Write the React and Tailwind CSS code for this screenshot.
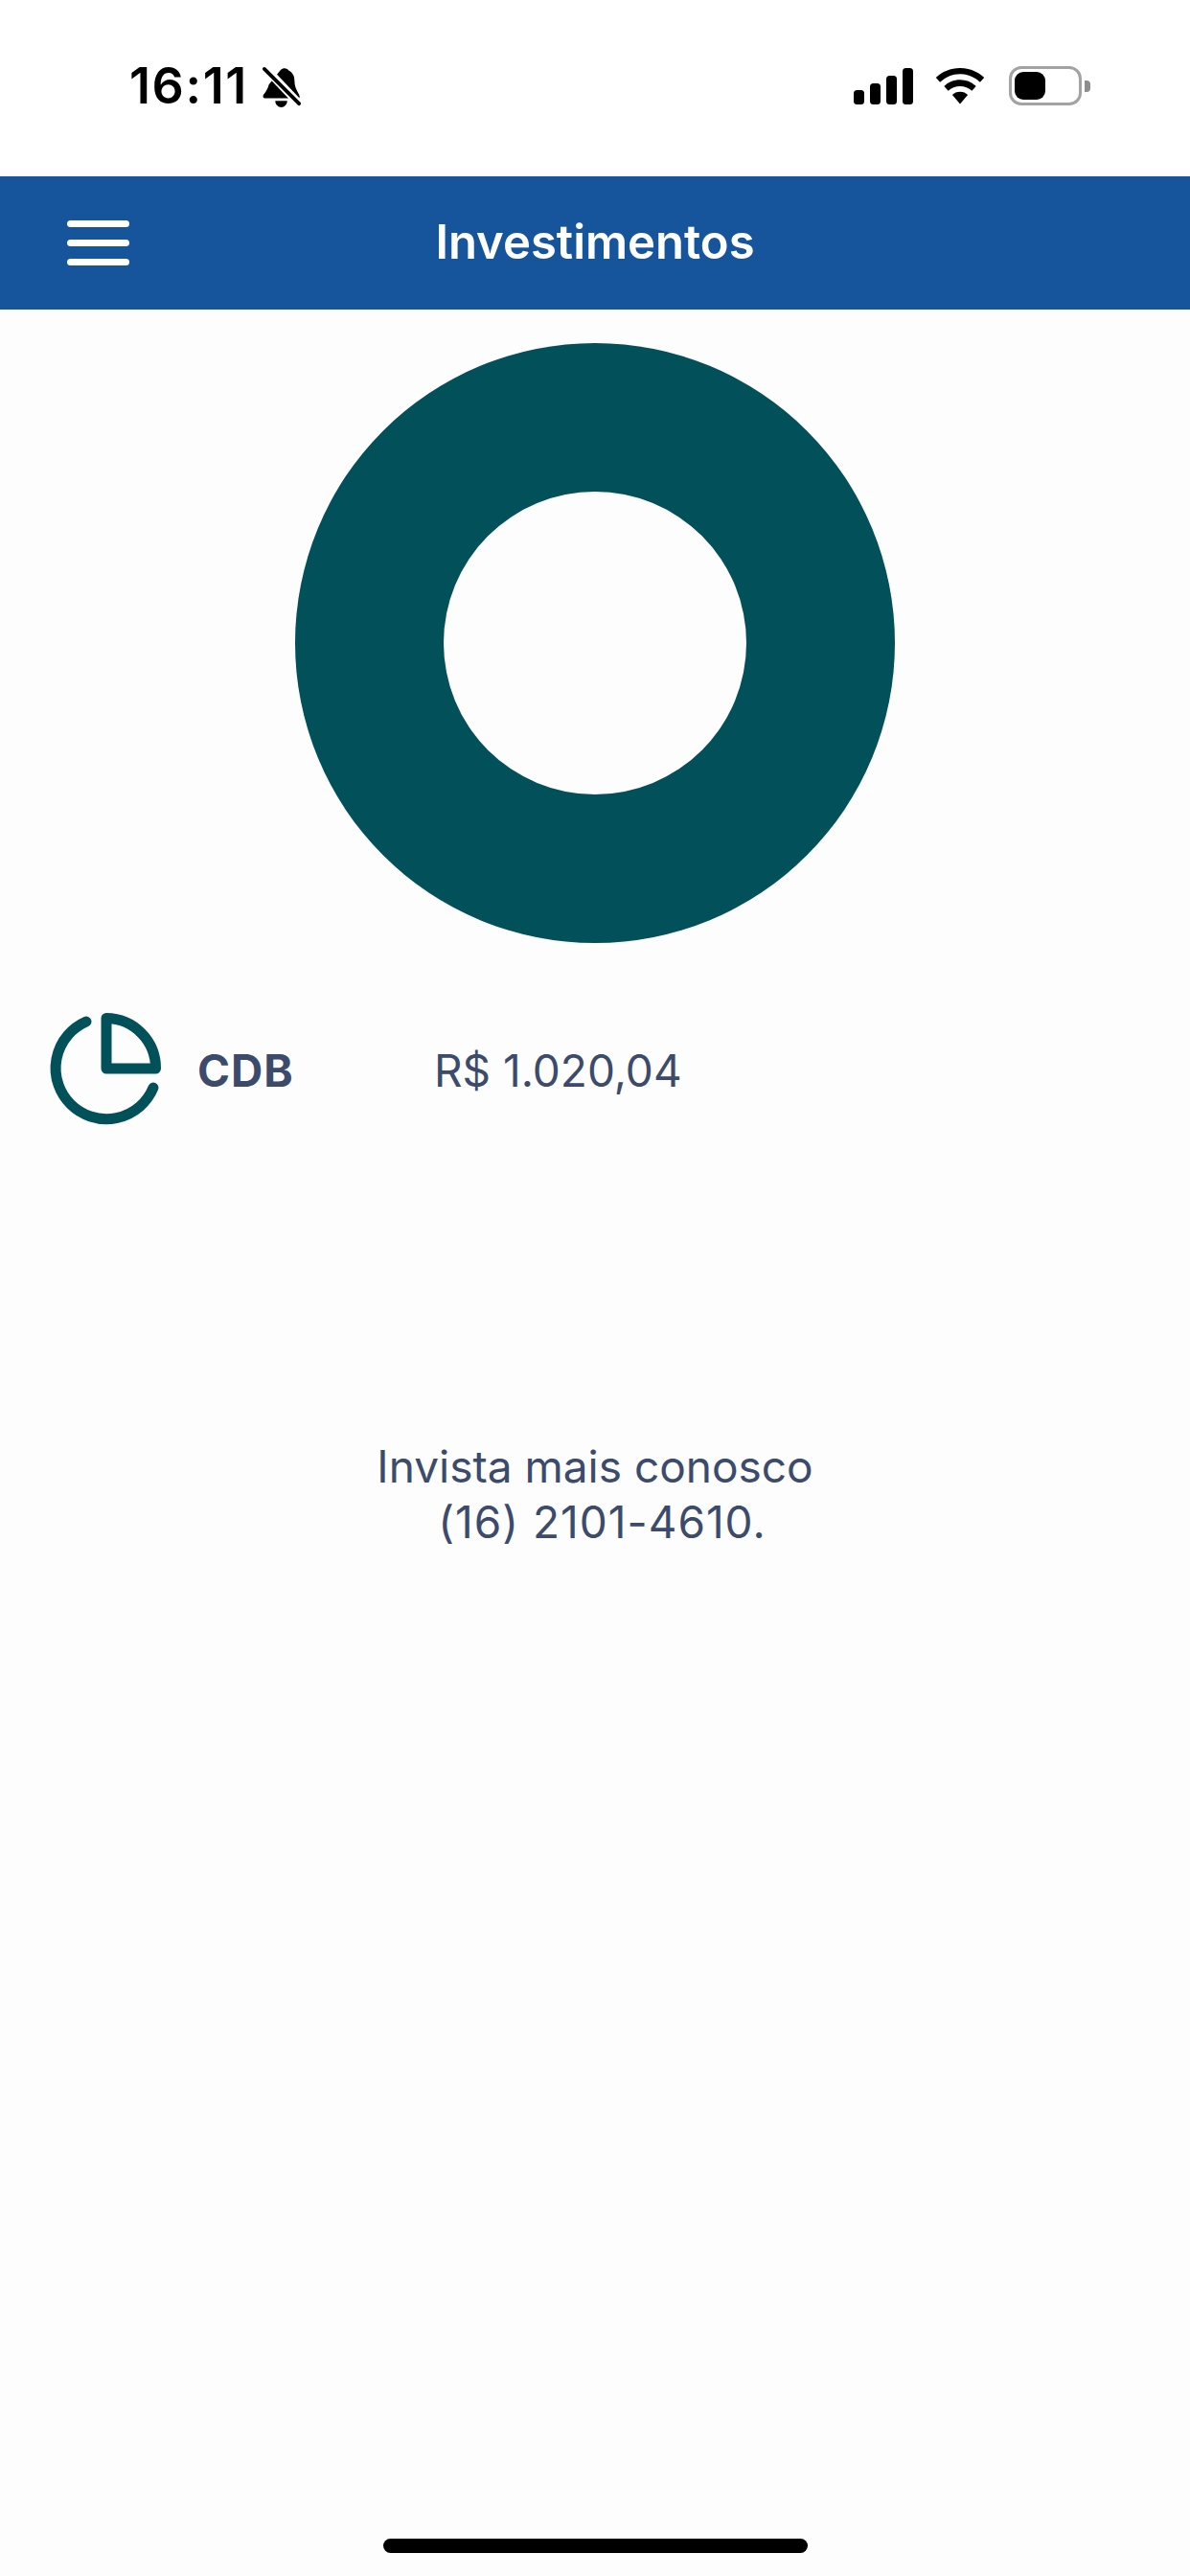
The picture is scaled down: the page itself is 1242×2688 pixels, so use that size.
export default function App() {
  return (
    <div className="w-[1242px] h-[2688px] bg-[#fdfdfd] flex flex-col font-['Inter','Liberation_Sans',sans-serif] overflow-hidden">
      <div className="h-[184px] bg-white flex items-start justify-between shrink-0 pt-[69px] pl-[135px] pr-[104px]">
        <div className="flex items-start">
          <span className="text-[52px] leading-[42px] font-semibold text-black tracking-[1.6px]">16:11</span>
          <svg width="42" height="44" viewBox="0 0 44 46" className="ml-[14px]">
            <path d="M21 4c3-3 7-2 9 1 4 2 6 6 6 11 0 6 2 10 5 15 1 2 1 4-1 4H4c-3 0-3-3-1-5 2-3 4-6 5-10z" fill="#000" />
            <path d="M15 38h13c0 4-3 7-6.500 7S15 42 15 38z" fill="#000" />
            <path d="M2 0L42 42" stroke="#fff" strokeWidth="9" />
            <path d="M3 3L41 41" stroke="#000" strokeWidth="4" strokeLinecap="round" />
          </svg>
        </div>
        <div className="flex items-start">
          <svg width="62" height="38" viewBox="0 0 62 38" className="mt-[2px]">
            <rect x="0" y="23" width="11" height="15" rx="3.500" fill="#000" />
            <rect x="17" y="16" width="11" height="22" rx="3.500" fill="#000" />
            <rect x="34" y="8" width="11" height="30" rx="3.500" fill="#000" />
            <rect x="51" y="0" width="11" height="38" rx="3.500" fill="#000" />
          </svg>
          <svg width="52" height="38" viewBox="0 0 54 40" className="ml-[23px] mt-[2px]">
            <path d="M27 0C16.500 0 7.500 4 0.500 10.500L5 15.500C11 10 18.500 6.500 27 6.500S43 10 49 15.500L53.500 10.500C46.500 4 37.500 0 27 0Z" fill="#000" />
            <path d="M27 13C20 13 14 15.500 9.500 20L14 25C17.500 21.800 22 20 27 20S36.500 21.800 40 25L44.500 20C40 15.500 34 13 27 13Z" fill="#000" />
            <path d="M27 26C23.500 26 20.500 27.200 18.500 29.500L27 39.500L35.500 29.500C33.500 27.200 30.500 26 27 26Z" fill="#000" />
          </svg>
          <div className="ml-[25px] flex items-center">
            <div className="w-[76px] h-[41px] rounded-[13px] border-[3px] border-[#a3a3a3] p-[3px] flex">
              <div className="w-[32px] h-full rounded-[9px] bg-black" />
            </div>
            <div className="w-[6px] h-[12px] ml-[3px] bg-[#8e8e8e] rounded-r-[4px]" />
          </div>
        </div>
      </div>

      <div className="h-[139px] shrink-0 bg-[#16559b] relative flex items-center justify-center">
        <div className="absolute left-[70px] top-[46px] w-[65px] flex flex-col gap-[13px]">
          <div className="h-[7px] rounded-full bg-white" />
          <div className="h-[7px] rounded-full bg-white" />
          <div className="h-[7px] rounded-full bg-white" />
        </div>
        <span className="text-[49px] leading-[56px] font-semibold text-white mb-[1px]">Investimentos</span>
      </div>

      <div className="flex justify-center pt-[35px] shrink-0">
        <div className="w-[626px] h-[626px] rounded-full bg-[#02505a] flex items-center justify-center">
          <div className="w-[316px] h-[316px] rounded-full bg-[#fdfdfd]" />
        </div>
      </div>

      <div className="flex items-center h-[124px] mt-[72px] pl-[48px] shrink-0">
        <svg width="124" height="124" viewBox="0 0 124 124" fill="none" stroke="#02505a" strokeWidth="11" strokeLinecap="round" strokeLinejoin="round">
          <path d="M63 6.500A52 52 0 0 1 114.500 59H63Z" />
          <path d="M42 10A53 53 0 1 0 112 79" />
        </svg>
        <span className="ml-[34px] w-[247px] text-[46px] leading-[54px] font-bold tracking-[1px] text-[#3c4b6c] mb-[2px]">CDB</span>
        <span className="text-[46px] leading-[54px] text-[#3c4b6c] mb-[2px]">R$ 1.020,04</span>
      </div>

      <div className="mt-[321px] text-center text-[46px] leading-[58px] text-[#3c4b6c] shrink-0">
        <div>Invista mais conosco</div>
        <div className="pl-[15px] tracking-[1px]">(16) 2101-4610.</div>
      </div>

      <div className="mt-auto mb-[24px] mx-auto w-[443px] h-[15px] rounded-full bg-black shrink-0" />
    </div>
  );
}
